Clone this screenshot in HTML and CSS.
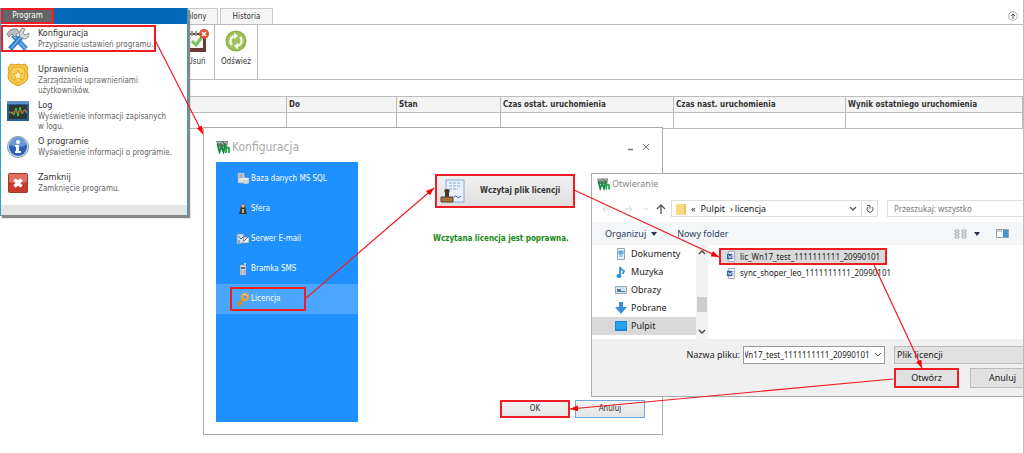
FILE: index.html
```
<!DOCTYPE html>
<html lang="pl">
<head>
<meta charset="utf-8">
<title>Konfiguracja – licencja</title>
<link rel="stylesheet" href="styles.css">
</head>
<body>
<svg class="symbols" aria-hidden="true">
  <symbol id="logo" viewBox="0 0 14 14">
    <path d="M0 1h12l-1 6H2z" fill="#6d7f75"/><path d="M1 2l3 1M4 2l3 2M8 2l3 1" stroke="#c4cdc8" fill="none"/>
    <path d="M1.500 4l2 8 2-6 2 6 2-8" fill="none" stroke="#128a3c" stroke-width="1.800"/>
    <path d="M10 13V7M10 9q3-3 3 0v4" fill="none" stroke="#20a04c" stroke-width="1.800"/>
  </symbol>
  <symbol id="doc" viewBox="0 0 10 12">
    <path d="M1.500.5h7v11h-7z" fill="#fff" stroke="#9aa5b5"/><path d="M0 3h6v6H0z" fill="#2c5db0"/><path d="M1.500 4.500l1 3 .8-2 .8 2 .9-3" fill="none" stroke="#fff" stroke-width=".7"/><path d="M7 4h1M7 6h1M7 8h1" stroke="#7f98c4"/>
  </symbol>
</svg>
<div class="app">
  <nav class="tabs">
    <button class="tab">Szablony</button>
    <button class="tab tab-history">Historia</button>
    <button class="collapse" aria-label="Zwiń wstążkę"><svg width="10" height="10" viewBox="0 0 10 10" fill="none" stroke="#555"><circle cx="5" cy="5" r="4.400" stroke="#999" stroke-width=".8"/><path d="M5 8V3M3 5l2-2 2 2"/></svg></button>
  </nav>
  <div class="ribbon">
    <button class="tool tool-delete">
      <svg width="24" height="24" viewBox="0 0 24 24"><path d="M2 4h19v19H2z" fill="#6b3a35"/><path d="M4 6h14v13H4z" fill="#f7f8f5"/><path d="M7 2v5M11 2v5" stroke="#999" stroke-width="2"/><path d="M7 12l4 4 6-8" fill="none" stroke="#7cc35a" stroke-width="3"/><circle cx="19" cy="5" r="5" fill="#d9542f"/><path d="M17 3l4 4m0-4l-4 4" stroke="#fff" stroke-width="1.500"/></svg>
      Usuń
    </button>
    <button class="tool tool-refresh">
      <svg width="22" height="22" viewBox="0 0 22 22"><circle cx="11" cy="11" r="10.500" fill="#8db14a"/><circle cx="11" cy="11" r="9" fill="#a0c25a"/><path d="M7 15a5.500 5.500 0 0 1 2-9M15 7a5.500 5.500 0 0 1-2 9" fill="none" stroke="#f3f8e6" stroke-width="2.400"/><path d="M9 2.500l4 3.500-4 3.500zM13 12.500v7L9 16z" fill="#f3f8e6"/></svg>
      Odśwież
    </button>
  </div>
  <table class="tasks">
    <colgroup><col class="c-name"><col class="c-from"><col class="c-to"><col class="c-state"><col class="c-time"><col class="c-time2"><col></colgroup>
    <thead><tr><th>Nazwa</th><th>Od</th><th>Do</th><th>Stan</th><th>Czas ostat. uruchomienia</th><th>Czas nast. uruchomienia</th><th>Wynik ostatniego uruchomienia</th></tr></thead>
    <tbody><tr><td></td><td></td><td></td><td></td><td></td><td></td><td></td></tr></tbody>
  </table>

  <section class="menu">
    <header class="menu-bar"><button class="program marked">Program</button></header>
    <ul class="menu-list">
      <li><button class="entry marked">
        <svg width="24" height="24" viewBox="0 0 24 24"><path d="M7 8l13 14" stroke="#2f7fc4" stroke-width="5"/><path d="M7 8l13 14" stroke="#6fb2e6" stroke-width="2"/><path d="M17 8L4 22" stroke="#2876bd" stroke-width="5"/><path d="M17 8L5 21" stroke="#62a9e2" stroke-width="2"/><path d="M1 7q3-6 10-5l2 3-4 5-3-3-3 3z" fill="#b9bdc1" stroke="#84888d"/><path d="M14 10l-1-4 3-5 3 1-2 4 2 2 4-2q0 6-5 6z" fill="#d4d7da" stroke="#8c9094"/></svg>
        <span class="entry-text"><span class="entry-title">Konfiguracja</span><span>Przypisanie ustawień programu.</span></span></button></li>
      <li><button class="entry">
        <svg width="24" height="24" viewBox="0 0 24 24"><path d="M12 1l3 1 4-1 3 4-1 3q3 8-3 12l-6 3-6-3Q0 16 3 8L2 5l3-4 4 1z" fill="#f6c544" stroke="#d99a1c"/><path d="M12 4l6 1q4 10-6 15Q2 15 6 5z" fill="#fbd15c" stroke="#e5ae33"/><path d="M12 7l1.500 3.500 3.500.3-2.700 2.400 1 3.800-3.300-2-3.300 2 1-3.800L7 10.800l3.500-.3z" fill="#fff1b8" stroke="#d99a1c" stroke-width=".8"/></svg>
        <span class="entry-text"><span class="entry-title">Uprawnienia</span><span>Zarządzanie uprawnieniami<br>użytkowników.</span></span></button></li>
      <li><button class="entry">
        <svg width="24" height="24" viewBox="0 0 24 24"><path d="M1 2h22v20H1z" fill="#2a5f96"/><path d="M1 2h22v3H1z" fill="#5d93c8"/><path d="M3 6h18v14H3z" fill="#2b3a35"/><path d="M3 14l3-1 2 3 2-7 2 8 2-9 2 7 2-4 3 3" fill="none" stroke="#54cf4a"/><path d="M3 12l3 3 3-4 2 3 3-3 2 4 3-5 2 3" fill="none" stroke="#d5503c"/></svg>
        <span class="entry-text"><span class="entry-title">Log</span><span>Wyświetlenie informacji zapisanych<br>w logu.</span></span></button></li>
      <li><button class="entry">
        <svg width="24" height="24" viewBox="0 0 24 24"><circle cx="12" cy="12" r="10.500" fill="#d8dee8" stroke="#8b97aa"/><circle cx="12" cy="12" r="9" fill="#2b62b4"/><path d="M4 10a8 8 0 0 1 16 0q-8 4-16 0" fill="#6b98d6"/><circle cx="12" cy="7" r="2" fill="#fff"/><path d="M9 10h4v6h2v2H9v-2h1v-4H9z" fill="#fff"/></svg>
        <span class="entry-text"><span class="entry-title">O programie</span><span>Wyświetlenie informacji o programie.</span></span></button></li>
      <li><button class="entry">
        <svg width="24" height="24" viewBox="0 0 24 24"><rect x="2.500" y="2.500" width="19" height="19" rx="1" fill="#c93b2c" stroke="#a6372c"/><path d="M3 3h18v8q-9 2-18 0z" fill="#dc7163"/><path d="M8.500 8.500l7 7m0-7l-7 7" stroke="#fff" stroke-width="3.500"/></svg>
        <span class="entry-text"><span class="entry-title">Zamknij</span><span>Zamknięcie programu.</span></span></button></li>
    </ul>
    <footer class="menu-foot"></footer>
  </section>

  <section class="config">
    <header class="config-head">
      <svg width="14" height="14"><use href="#logo"/></svg><h1>Konfiguracja</h1>
      <button class="min" aria-label="Minimalizuj"><svg width="8" height="8"><path d="M1 6.500h5" stroke="#777" stroke-width="1.500"/></svg></button>
      <button aria-label="Zamknij okno"><svg width="8" height="8"><path d="M1 1l6 6m0-6l-6 6" stroke="#777"/></svg></button>
    </header>
    <div class="config-body">
      <nav class="side">
        <button class="side-item"><svg width="14" height="14" viewBox="0 0 14 14"><path d="M2 1h6l1 10H2z" fill="#dde3e8" stroke="#909ca6" stroke-width=".7"/><path d="M3 3h4M3 5h4" stroke="#7b8790"/><ellipse cx="10" cy="7" rx="3" ry="1.500" fill="#f2eedf"/><path d="M7 7v4q3 2 6 0V7q-3 2-6 0" fill="#cdd5d9"/></svg>Baza danych MS SQL</button>
        <button class="side-item"><svg width="14" height="14" viewBox="0 0 14 14"><path d="M5 4q2-5 4 0l1 5 1 3H3l1-3z" fill="#3b332e"/><circle cx="7" cy="4" r="1.700" fill="#e6b489"/><path d="M6 7h2v4H6z" fill="#c9b08a"/></svg>Sfera</button>
        <button class="side-item"><svg width="14" height="14" viewBox="0 0 14 14"><path d="M1 2h7v9l-7 1z" fill="#cfdde8" stroke="#788fa3" stroke-width=".7"/><path d="M2 4l3 3 3-3M3 8v3" fill="none" stroke="#526b82"/><path d="M8 5h5v6H7z" fill="#eaf0f4" stroke="#71879b" stroke-width=".7"/><path d="M8 9l4-4" stroke="#526b82"/></svg>Serwer E-mail</button>
        <button class="side-item"><svg width="14" height="14" viewBox="0 0 14 14"><path d="M9 1v3" stroke="#d9e0e4" stroke-width="2"/><path d="M4 3h6v10H4z" fill="#d8dde0" stroke="#7b8890" stroke-width=".6"/><path d="M5 5h4v2H5z" fill="#4b6f8f"/><path d="M5 9h4M5 11h4" stroke="#7b8890" stroke-dasharray="1 .5"/></svg>Bramka SMS</button>
        <button class="side-item active"><span class="side-mark marked"><svg width="14" height="14" viewBox="0 0 14 14"><path d="M7 7l-5 5 1 1 2-1M4 10l2 2" fill="none" stroke="#d98f22" stroke-width="2"/><circle cx="9" cy="5" r="3" fill="none" stroke="#e9a52f" stroke-width="2.500"/><path d="M7 3q3-2 4 1" fill="none" stroke="#ffe093"/></svg>Licencja</span></button>
      </nav>
      <div class="license">
        <button class="load marked"><svg width="26" height="26" viewBox="0 0 26 26"><path d="M6 2h18v22H6z" fill="#e8f1fb" stroke="#8cacd2"/><path d="M9 5h11M9 8h12M9 11h9" stroke="#88abd2" stroke-dasharray="3 1"/><path d="M14 19q2-2 3 0t4-1" fill="none" stroke="#3f58b0"/><path d="M5 19V15q-2-4 2-4t2 4v4z" fill="#4a3a2a"/><path d="M1 19h12v5H1z" fill="#a1783c" stroke="#54402a"/></svg><span>Wczytaj plik licencji</span></button>
        <p class="status">Wczytana licencja jest poprawna.</p>
      </div>
    </div>
    <footer class="config-foot"><button class="ok marked">OK</button><button class="cancel">Anuluj</button></footer>
  </section>

  <section class="picker">
    <header class="picker-head"><svg width="13" height="14" viewBox="0 0 14 14"><use href="#logo"/></svg>Otwieranie</header>
    <div class="path-row">
      <svg class="arrows" width="64" height="12" viewBox="0 0 64 12" fill="none"><path d="M9 6H2m3-3L2 6l3 3M24 6h7m-3-3l3 3-3 3M43 5l2 2 2-2" stroke="#d3d5d8"/><path d="M60 11V2m-4 4l4-4 4 4" stroke="#555" stroke-width="1.300"/></svg>
      <div class="crumbs">
        <svg width="10" height="12"><path d="M0 1h10v11H0z" fill="#f9dc80"/><path d="M8 1h2v11H8z" fill="#eec65a"/></svg>
        <span>«</span><span class="crumb">Pulpit</span><span class="sep">›</span><span>licencja</span>
        <svg class="drop" width="8" height="6"><path d="M1 1l3 3 3-3" fill="none" stroke="#555" stroke-width="1.300"/></svg>
      </div>
      <button class="reload" aria-label="Odśwież folder"><svg width="8" height="10" viewBox="0 0 8 10" fill="none" stroke="#555"><path d="M2 3a3 3 0 1 0 4 0M1 1.500h3v3"/></svg></button>
      <input class="search" aria-label="Szukaj" placeholder="Przeszukaj: wszystko">
    </div>
    <div class="commands">
      <button>Organizuj <svg width="6" height="4"><path d="M0 0h6L3 4z" fill="#26364e"/></svg></button>
      <button>Nowy folder</button>
      <button class="view" aria-label="Widok"><svg width="26" height="10"><path d="M1 1h4v2H1zM1 4h4v2H1zM1 7h4v2H1zM8 1h4v2H8zM8 4h4v2H8zM8 7h4v2H8z" fill="none" stroke="#a1a5aa" stroke-width=".8"/><path d="M20 3h6l-3 4z" fill="#26364e"/></svg></button>
      <button class="preview" aria-label="Okienko podglądu"><svg width="13" height="9"><path d="M.5.5h12v8H.5z" fill="#fff" stroke="#8fa2b3"/><path d="M7 1h5v7H7z" fill="#4593d4"/><path d="M1 2h5" stroke="#8fa2b3"/></svg></button>
    </div>
    <div class="browser">
      <ul class="places">
        <li><svg width="12" height="12"><path d="M2.500.5h7v11h-7z" fill="#edf4fa" stroke="#8ba4b8"/><path d="M4 3h4v3H4zM4 8h4" fill="#65aee0" stroke="#5da0d2"/></svg>Dokumenty</li>
        <li><svg width="12" height="12"><path d="M5 10V1q1 3 4 4-1 2-1 3" fill="none" stroke="#2491dc" stroke-width="1.700"/><ellipse cx="4" cy="10" rx="2.500" ry="2" fill="#2491dc"/></svg>Muzyka</li>
        <li><svg width="12" height="12"><path d="M.5 2.500h11v7H.5z" fill="#cfe5f3" stroke="#98a6b0"/><path d="M2 5h4v2h4v1H2z" fill="#5b8496"/></svg>Obrazy</li>
        <li><svg width="12" height="12"><path d="M4 0h4v5h4l-6 7-6-7h4z" fill="#3a8fd6"/></svg>Pobrane</li>
        <li class="current"><svg width="12" height="12"><path d="M0 1h12v10H0z" fill="#1587dc"/><path d="M1 2h10v7H1z" fill="#28a1f2"/></svg>Pulpit</li>
      </ul>
      <div class="scroll"><svg width="8" height="6"><path d="M1 5l3-3 3 3" fill="none" stroke="#444" stroke-width="1.300"/></svg><span class="thumb"></span><svg width="8" height="6"><path d="M1 1l3 3 3-3" fill="none" stroke="#444" stroke-width="1.300"/></svg></div>
      <ul class="files">
        <li class="file selected marked"><svg width="9" height="11"><use href="#doc"/></svg>lic_Wn17_test_1111111111_20990101</li>
        <li class="file"><svg width="9" height="11"><use href="#doc"/></svg>sync_shoper_leo_1111111111_20990101</li>
      </ul>
    </div>
    <footer class="picker-foot">
      <label for="fname">Nazwa pliku:</label>
      <div class="combo"><input id="fname" value="Wn17_test_1111111111_20990101"><svg width="8" height="6"><path d="M1 1l3 3 3-3" fill="none" stroke="#555"/></svg></div>
      <select class="type" aria-label="Typ pliku"><option>Plik licencji</option></select>
      <div class="actions"><button class="open marked">Otwórz</button><button class="abort">Anuluj</button></div>
    </footer>
  </section>

  <svg class="flow" aria-hidden="true">
    <defs><marker id="tip" viewBox="0 0 8 6" markerWidth="8" markerHeight="6" refX="8" refY="3" orient="auto" markerUnits="userSpaceOnUse"><path d="M0 0l8 3-8 3z" fill="#f00"/></marker></defs>
    <g stroke="#ee1c23" stroke-width="1.200">
      <line x1="154" y1="38" x2="203" y2="134" marker-end="url(#tip)"/>
      <line x1="305" y1="299" x2="434" y2="188" marker-end="url(#tip)"/>
      <line x1="574" y1="190" x2="719" y2="257" marker-end="url(#tip)"/>
      <line x1="874" y1="265" x2="922" y2="368" marker-end="url(#tip)"/>
      <line x1="893" y1="379" x2="570" y2="409" marker-end="url(#tip)"/>
    </g>
  </svg>
</div>
</body>
</html>
```
FILE: styles.css
```
* { box-sizing: border-box; }
body { margin: 0; background: #fff; color: #333; font: 8px/10px "DejaVu Sans Condensed", "DejaVu Sans", sans-serif; }
button, input, select { font: inherit; color: inherit; margin: 0; padding: 0; border: 0; border-radius: 0; background: none; }
ul { list-style: none; margin: 0; padding: 0; }
svg { flex: none; display: block; }
.symbols { position: absolute; width: 0; height: 0; }
.app { position: relative; min-height: 100vh; overflow: hidden; padding-top: 8px; border-right: 1px solid #bbb; }

.tabs { display: flex; height: 16px; padding-left: 163px; gap: 2px; }
.tab { padding: 0 10px; border: 1px solid #c8c8c8; border-bottom: 0; background: #f5f5f5; }
.tab-history { padding: 0 12px; }
.collapse { margin-left: auto; padding-right: 5px; }
.ribbon { display: flex; height: 56px; padding-left: 179px; border: 1px solid #bbb; border-left: 0; border-right: 0; }
.tool { display: flex; flex-direction: column; align-items: center; justify-content: flex-start; gap: 4px; padding-top: 4px; border-right: 1px solid #bbb; }
.tool svg { height: 24px; }
.tool-delete { width: 36px; }
.tool-refresh { width: 43px; }

.tasks { width: 100%; margin-top: 16px; border-collapse: collapse; table-layout: fixed; }
.tasks th, .tasks td { height: 16px; padding: 0 2px; border: 1px solid #bbb; text-align: left; }
.tasks th { background: #f4f4f4; font-weight: bold; }
.c-name { width: 175px; } .c-from { width: 111px; } .c-to { width: 110px; } .c-state { width: 104px; } .c-time { width: 173px; } .c-time2 { width: 172px; }

.marked { outline: 2px solid #ee1c23; outline-offset: -2px; }

.menu { position: absolute; left: 0; top: 8px; width: 188px; border: 1px solid #35a0c4; border-top: 0; border-bottom-color: #888; background: #fff; box-shadow: 2px 2px 1px #888; }
.menu-bar { display: flex; height: 16px; background: #0069ba; }
.program { width: 53px; background: #656565; color: #fff; }
.menu-list { display: grid; grid-auto-rows: 36px; padding-top: 1px; }
.entry { display: flex; gap: 8px; padding: 2px 3px 1px 5px; text-align: left; color: #666; white-space: nowrap; }
.entry-text { display: flex; flex-direction: column; }
.entry-title { font-size: 9px; line-height: 13px; color: #333; }
.menu-foot { height: 10px; background: #e4e4e4; }

.config { position: absolute; left: 203px; top: 127px; width: 460px; padding: 12px 12px 16px; border: 1px solid #aaa; background: #fff; }
.config-head { display: flex; align-items: center; gap: 2px; height: 14px; }
.config-head h1 { flex: 1; margin: 0; font-size: 12px; line-height: 14px; font-weight: normal; color: #aaa; }
.min { padding-right: 5px; }
.config-body { display: grid; grid-template-columns: 142px 1fr; margin-top: 8px; }
.side { height: 260px; padding-top: 2px; background: #1e90ff; }
.side-item { display: flex; align-items: center; gap: 1px; width: 100%; height: 30px; padding-left: 20px; color: #fff; }
.side-item.active { padding-left: 14px; background: #4ba6ff; }
.side-mark { display: flex; align-items: center; gap: 1px; width: 76px; height: 24px; padding-left: 6px; }
.license { padding: 12px 0 0 77px; }
.load { display: flex; align-items: center; gap: 14px; width: 140px; height: 34px; padding-left: 5px; background: linear-gradient(#f1f1f1, #dedede); font-weight: bold; }
.status { margin: 26px 0 0 -2px; color: #148a14; font-weight: bold; white-space: nowrap; }
.config-foot { display: flex; justify-content: flex-end; gap: 5px; margin-top: -22px; padding-right: 5px; }
.config-foot button { width: 70px; height: 18px; background: linear-gradient(#f3f3f3, #e3e3e3); }
.config-foot .cancel { border: 1px solid #6ea6df; }

.picker { position: absolute; left: 591px; top: 173px; width: 446px; border: 1px solid #aaa; background: #fff; color: #222; font: 9px/12px "Noto Sans", "Open Sans", sans-serif; }
.picker-head { display: flex; align-items: center; gap: 2px; padding: 3px 5px; height: 20px; color: #888; }
.path-row { display: flex; align-items: center; height: 28px; padding: 1px 0 0 9px; }
.arrows { margin-right: 6px; overflow: visible; }
.crumbs { display: flex; align-items: center; gap: 5px; width: 191px; height: 17px; padding: 0 4px; border: 1px solid #ddd; }
.sep + span { margin-left: -3px; }
.drop { margin-left: auto; }
.reload { display: flex; align-items: center; justify-content: center; width: 16px; height: 17px; border: 1px solid #ddd; border-left: 0; }
.search { flex: 1; height: 17px; margin-left: 9px; padding-left: 6px; border: 1px solid #ddd; font-size: 8px; }
.search::placeholder { color: #777; opacity: 1; }
.commands { display: flex; align-items: center; gap: 20px; height: 23px; padding: 0 27px 0 13px; background: #f4f6f8; color: #2b3d5c; }
.commands button { display: flex; align-items: center; gap: 5px; }
.view { margin-left: auto; }
.commands .preview { margin-left: -4px; }
.browser { display: grid; grid-template-columns: 104px 12px 1fr; height: 94px; }
.places li { display: flex; align-items: center; gap: 4px; height: 18px; padding-left: 23px; }
.places .current { background: #d9d9d9; }
.scroll { display: flex; flex-direction: column; align-items: center; justify-content: space-between; padding: 4px 0; background: #f2f2f2; }
.thumb { width: 10px; height: 15px; margin-top: 24px; background: #cdcdcd; }
.files { padding: 3px 0 0 11px; }
.file { display: flex; align-items: center; gap: 4px; width: 168px; height: 16px; padding-left: 8px; white-space: nowrap; font-size: 8px; }
.file.selected { height: 17px; background: #d9d9d9; }
.picker-foot { display: grid; grid-template-columns: 151px 142px 1fr; grid-auto-rows: 18px; gap: 4px 0; height: 57px; padding-top: 7px; background: #f0f0f0; }
.picker-foot label { padding: 3px 3px 0 0; text-align: right; }
.combo { display: flex; align-items: center; padding-right: 2px; border: 1px solid #999; background: #fff; }
.combo input { flex: 1; min-width: 0; margin-left: 1px; text-indent: -4px; font-size: 8px; }
.type { appearance: none; margin-left: 9px; padding-left: 2px; border: 1px solid #bbb; background: #e1e1e1; }
.actions { grid-column: 3; display: flex; gap: 11px; padding-left: 9px; }
.actions button { width: 65px; height: 20px; border: 1px solid #bbb; background: #e1e1e1; }

.flow { position: absolute; inset: 0; width: 100%; height: 100%; pointer-events: none; }
```
